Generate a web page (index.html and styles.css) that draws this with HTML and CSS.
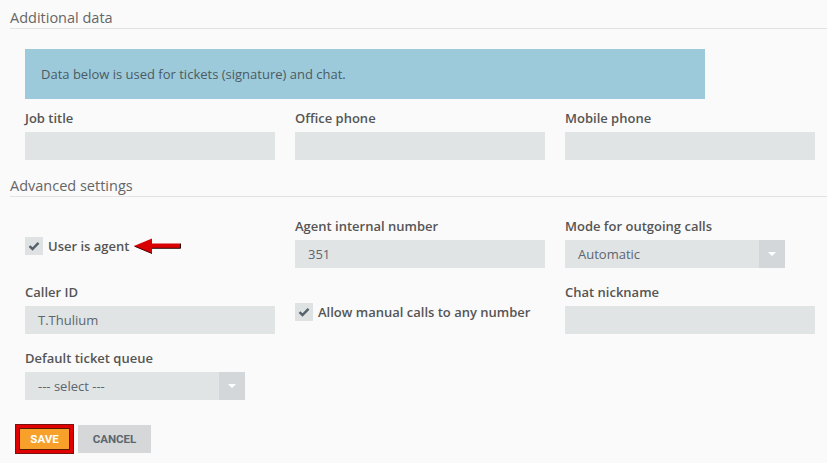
FILE: index.html
```html
<!DOCTYPE html>
<html lang="en">
<head>
    <meta charset="UTF-8">
    <meta name="viewport" content="width=device-width, initial-scale=1.0">
    <title>User settings</title>
    <link rel="stylesheet" href="styles.css">
</head>
<body>
    <div class="page">
        <h2 class="section-title">Additional data</h2>
        <div class="section">
            <div class="info-box">Data below is used for tickets (signature) and chat.</div>
            <div class="row">
                <div class="field">
                    <label>Job title</label>
                    <div class="input"></div>
                </div>
                <div class="field">
                    <label>Office phone</label>
                    <div class="input"></div>
                </div>
                <div class="field">
                    <label>Mobile phone</label>
                    <div class="input"></div>
                </div>
            </div>
        </div>

        <h2 class="section-title">Advanced settings</h2>
        <div class="section">
            <div class="row">
                <div class="field check-field">
                    <div class="check">
                        <span class="box"><svg width="12" height="10" viewBox="0 0 12 10"><path d="M1.5 5.2 L4.5 8 L10.5 1.8" fill="none" stroke="#56626b" stroke-width="2.4"/></svg></span>
                        <span class="check-text">User is agent</span>
                        <svg class="arrow" width="47" height="16" viewBox="0 0 47 16">
                            <path d="M16 5.5 H46 V10 H16 Z" fill="#d80000"/>
                            <path d="M16 10.3 H46.5 V5.5" fill="none" stroke="#2a0000" stroke-width="1"/>
                            <path d="M0 8 L18 0.5 L18 15.5 Z" fill="#d80000"/>
                            <path d="M0.5 8.2 L18 15.5" stroke="#4a0000" stroke-width="1"/>
                        </svg>
                    </div>
                </div>
                <div class="field">
                    <label>Agent internal number</label>
                    <div class="input">351</div>
                </div>
                <div class="field">
                    <label>Mode for outgoing calls</label>
                    <div class="select short">
                        <span class="value">Automatic</span>
                        <span class="caret"></span>
                    </div>
                </div>
            </div>
            <div class="row">
                <div class="field">
                    <label>Caller ID</label>
                    <div class="input">T.Thulium</div>
                </div>
                <div class="field check-field">
                    <div class="check">
                        <span class="box"><svg width="12" height="10" viewBox="0 0 12 10"><path d="M1.5 5.2 L4.5 8 L10.5 1.8" fill="none" stroke="#56626b" stroke-width="2.4"/></svg></span>
                        <span class="check-text">Allow manual calls to any number</span>
                    </div>
                </div>
                <div class="field">
                    <label>Chat nickname</label>
                    <div class="input"></div>
                </div>
            </div>
            <div class="row">
                <div class="field">
                    <label>Default ticket queue</label>
                    <div class="select short">
                        <span class="value">--- select ---</span>
                        <span class="caret"></span>
                    </div>
                </div>
            </div>
        </div>

        <div class="actions">
            <span class="highlight"><button class="btn save">SAVE</button></span>
            <button class="btn cancel">CANCEL</button>
        </div>
    </div>
</body>
</html>
```

FILE: styles.css
```css
*{
    margin: 0;
    padding: 0;
    box-sizing: border-box;
}
body {
    font-family: "Open Sans", "Noto Sans", sans-serif;
    font-size: 13px;
    color: #555;
    background-color: #fafafa;
    width: 827px;
    height: 463px;
    overflow: hidden;
}
.page {
    padding: 8px 0 0 10px;
}
.section-title {
    font-size: 14.5px;
    font-weight: 400;
    line-height: 20px;
    color: #666;
    border-bottom: 1px solid #e3e3e3;
    margin-bottom: 20px;
}
.section {
    padding-left: 15px;
    margin-bottom: 16px;
}
.info-box {
    width: 680px;
    height: 50px;
    background: #9ccadb;
    color: #4b5a63;
    padding-left: 16px;
    line-height: 50px;
    margin-bottom: 10px;
}
.row {
    display: grid;
    grid-template-columns: 250px 250px 250px;
    column-gap: 20px;
    margin-bottom: 15px;
}
.row:last-child {
    margin-bottom: 0;
}
.field label {
    display: block;
    font-weight: 600;
    line-height: 18px;
    margin-bottom: 5px;
    color: #555;
}
.input, .select {
    height: 28px;
    background: #e1e4e5;
    color: #5b6670;
    line-height: 28px;
    padding-left: 13px;
}
.select {
    display: flex;
    justify-content: space-between;
    padding-left: 0;
}
.select.short {
    width: 220px;
}
.select .value {
    padding-left: 13px;
}
.caret {
    width: 26px;
    height: 28px;
    background: #d4d7d9;
    position: relative;
}
.caret::after {
    content: "";
    position: absolute;
    left: 9px;
    top: 12px;
    border-left: 4px solid transparent;
    border-right: 4px solid transparent;
    border-top: 4px solid #fff;
}
.check-field {
    padding-top: 20px;
}
.check {
    display: flex;
    align-items: center;
    height: 18px;
}
.box {
    width: 18px;
    height: 18px;
    background: #dfe2e3;
    display: flex;
    align-items: center;
    justify-content: center;
    margin-right: 5px;
}
.check-text {
    font-weight: 600;
    color: #555;
}
.arrow {
    margin-left: 5px;
}
.actions {
    display: flex;
    align-items: center;
    padding: 8px 0 0 5px;
    gap: 4px;
}
.highlight {
    display: inline-block;
    border: 4px solid #e00000;
    outline: 1px solid #7a1010;
    outline-offset: -1px;
}
.btn {
    font-family: "Roboto", sans-serif;
    font-weight: 700;
    font-size: 11.5px;
    border: none;
    height: 28px;
}
.save {
    display: block;
    background: #f7a12a;
    color: #fff;
    width: 51px;
    height: 22px;
    border: 1px solid #5a1a00;
}
.cancel {
    background: #d5d7d8;
    color: #5b6670;
    width: 73px;
}
```
